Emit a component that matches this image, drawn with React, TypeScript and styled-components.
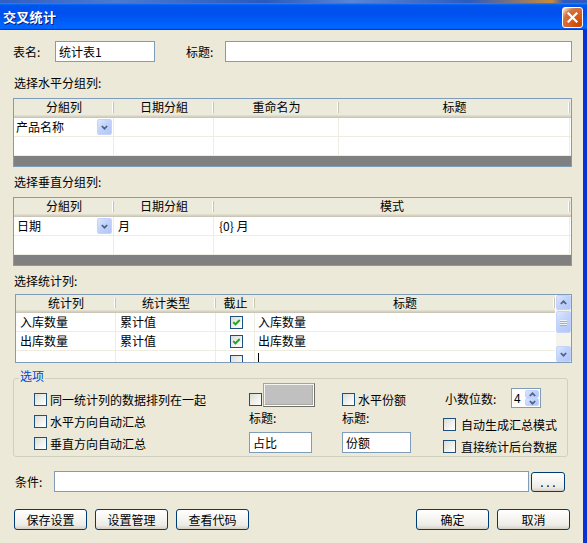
import styled, { createGlobalStyle } from 'styled-components'

const GlobalStyle = createGlobalStyle`
  html, body { margin: 0; padding: 0; background: #ECE9D8; }
  body {
    font-family: "Noto Sans CJK SC", "Liberation Sans", sans-serif;
    font-size: 12px;
    color: #000;
  }
  * { box-sizing: border-box; }
`

const Screen = styled.div`
  width: 587px;
  height: 543px;
  overflow: hidden;
  display: flex;
  flex-direction: column;
  background: #ECE9D8;
`

const Desktop = styled.div`
  flex: none;
  height: 3px;
  background: linear-gradient(90deg, #2F5FC4 0%, #4C79D2 20%, #2A58BE 45%, #5A84D6 60%, #2C5AC0 80%, #C98A3A 94%, #2C5AC0 96%);
`

const TitleBar = styled.div`
  flex: none;
  height: 27px;
  display: flex;
  align-items: center;
  justify-content: space-between;
  padding: 0 4px 0 3px;
  background: linear-gradient(180deg, #0997ff, #0053ee 8%, #0050ee 40%, #06f 88%, #06f 93%, #005bff 95%, #003dd7 96%, #003dd7);
`

const Title = styled.span`
  color: #fff;
  font-weight: 700;
  font-size: 13px;
  letter-spacing: 0.3px;
  text-shadow: 1px 1px 0 #0a1883;
`

const CloseButton = styled.div`
  width: 21px;
  height: 21px;
  margin-top: 1px;
  border: 1px solid #fff;
  border-radius: 3px;
  background: radial-gradient(circle at 85% 85%, #cc4600 0, #dc6527 55%, #cd7546 70%, #ffccb2 90%, #fff);
  display: flex;
  align-items: center;
  justify-content: center;
`

const Body = styled.div`
  flex: 1;
  border-right: 4px solid #0831d9;
  padding: 11px 11px 0 13px;
  display: flex;
  flex-direction: column;
`

const FieldRow = styled.div`
  display: flex;
  align-items: center;
  height: 21px;
  flex: none;
`

const FieldLabel = styled.span<{ $w: number; $ml?: number }>`
  width: ${(p) => p.$w}px;
  margin-left: ${(p) => p.$ml ?? 0}px;
  flex: none;
  white-space: nowrap;
`

const TextInput = styled.div<{ $w?: number }>`
  height: 21px;
  ${(p) => (p.$w ? `width: ${p.$w}px; flex: none;` : 'flex: 1;')}
  border: 1px solid #7f9db9;
  background: #fff;
  padding-left: 3px;
  line-height: 19px;
  white-space: nowrap;
  overflow: hidden;
`

const SectionLabel = styled.div<{ $mt: number; $mb: number }>`
  line-height: 14px;
  height: 14px;
  margin: ${(p) => p.$mt}px 0 ${(p) => p.$mb}px 1px;
  flex: none;
`

const Table = styled.div<{ $inset?: boolean }>`
  flex: none;
  height: 69px;
  margin-left: ${(p) => (p.$inset ? 2 : 0)}px;
  border: 1px solid #7f9db9;
  background: #fff;
  display: flex;
  overflow: hidden;
`

const TableMain = styled.div`
  flex: 1;
  min-width: 0;
  display: flex;
  flex-direction: column;
`

const HeaderRow = styled.div<{ $cols: string; $h: number }>`
  flex: none;
  display: grid;
  grid-template-columns: ${(p) => p.$cols};
  height: ${(p) => p.$h}px;
  line-height: ${(p) => p.$h}px;
  background: #ebeadb;
`

const HeaderCell = styled.div`
  position: relative;
  text-align: center;
  white-space: nowrap;
  &::after {
    content: '';
    position: absolute;
    right: 0;
    top: 3px;
    bottom: 2px;
    width: 1px;
    background: #c7c5b2;
    box-shadow: -1px 0 0 #fff;
  }
`

const HeaderBand = styled.div`
  flex: none;
  height: 3px;
  background: linear-gradient(#e2decd 0 1px, #d6d2c2 1px 2px, #cbc7b8 2px 3px);
`

const Rows = styled.div<{ $fill?: boolean }>`
  flex: ${(p) => (p.$fill ? 1 : 'none')};
  overflow: hidden;
`

const Row = styled.div<{ $cols: string }>`
  display: grid;
  grid-template-columns: ${(p) => p.$cols};
  height: 19px;
  border-bottom: 1px solid #efede2;
`

const Cell = styled.div<{ $pl?: number; $center?: boolean }>`
  border-right: 1px solid #efede2;
  padding-left: ${(p) => p.$pl ?? 3}px;
  display: flex;
  align-items: center;
  justify-content: ${(p) => (p.$center ? 'center' : 'space-between')};
  line-height: 18px;
  white-space: nowrap;
  overflow: hidden;
  &:last-child { border-right: none; }
`

const Filler = styled.div`
  flex: 1;
  background: #808080;
`

const BlueButton = styled.div<{ $w: number; $h: number }>`
  width: ${(p) => p.$w}px;
  height: ${(p) => p.$h}px;
  flex: none;
  border: 1px solid #c3d3fd;
  border-radius: 2px;
  background: linear-gradient(135deg, #dde6fd 0%, #c1d3fb 45%, #b2c6f6 100%);
  display: flex;
  align-items: center;
  justify-content: center;
`

const ComboButton = styled(BlueButton)`
  margin-right: 1px;
`

const ScrollBar = styled.div`
  flex: none;
  width: 16px;
  display: flex;
  flex-direction: column;
  background: #f5f4ea;
  border-left: 1px solid #fff;
`

const ScrollThumb = styled(BlueButton)`
  margin-top: 1px;
  flex-direction: column;
  gap: 1px;
`

const ScrollTrack = styled.div`
  flex: 1;
`

const Grip = styled.span`
  width: 7px;
  height: 1px;
  background: #eef4fe;
  box-shadow: 0 1px 0 #8cb0f8;
`

const Caret = styled.span`
  width: 1px;
  height: 9px;
  background: #000;
  margin-top: -6px;
`

const Box = styled.span<{ $mt?: number }>`
  width: 13px;
  height: 13px;
  flex: none;
  margin-top: ${(p) => p.$mt ?? 0}px;
  border: 1px solid #1c5180;
  background: linear-gradient(135deg, #dcdcd7 0%, #f2f2ef 60%, #ffffff 100%);
  display: flex;
  align-items: center;
  justify-content: center;
`

const GroupBox = styled.div`
  flex: none;
  height: 79px;
  margin: 15px 4px 0 0;
  border: 1px solid #d0d0bf;
  border-radius: 3px;
  display: flex;
  flex-direction: column;
`

const Legend = styled.span`
  align-self: flex-start;
  margin: -9px 0 0 5px;
  padding: 0 1px;
  line-height: 12px;
  height: 12px;
  color: #0046d5;
  background: #ece9d8;
`

const GroupContent = styled.div`
  margin-top: 1px;
  padding-left: 20px;
  display: flex;
`

const Column = styled.div<{ $w?: number; $pt?: number; $gap?: number }>`
  ${(p) => (p.$w ? `width: ${p.$w}px; flex: none;` : 'flex: 1;')}
  padding-top: ${(p) => p.$pt ?? 0}px;
  display: flex;
  flex-direction: column;
  gap: ${(p) => p.$gap ?? 0}px;
`

const CheckRow = styled.div<{ $gap?: number; $mt?: number }>`
  display: flex;
  align-items: center;
  gap: ${(p) => p.$gap ?? 3}px;
  height: 13px;
  line-height: 13px;
  margin-top: ${(p) => p.$mt ?? 0}px;
  white-space: nowrap;
`

const TopRow = styled.div`
  height: 24px;
  display: flex;
  align-items: flex-start;
  gap: 3px;
  white-space: nowrap;
`

const ColorSwatch = styled.div`
  width: 52px;
  height: 24px;
  margin-left: -2px;
  background: #c0c0c0;
  border: 1px solid;
  border-color: #a4a49a #6f6f6a #6f6f6a #a4a49a;
  box-shadow: inset 1px 1px 0 #f4f3ee, inset -1px -1px 0 #ffffff, inset -2px -2px 0 #a8a8a0;
`

const SmallLabel = styled.div`
  margin-top: 4px;
  line-height: 14px;
  height: 14px;
`

const SmallInput = styled(TextInput)`
  margin-top: 7px;
`

const SpinRow = styled.div`
  margin-top: 5px;
  height: 20px;
  display: flex;
  align-items: center;
  padding-left: 2px;
`

const Spin = styled.div`
  width: 30px;
  height: 20px;
  border: 1px solid #7f9db9;
  background: #fff;
  display: flex;
`

const SpinValue = styled.span`
  flex: 1;
  padding-left: 2px;
  line-height: 17px;
`

const SpinButtons = styled.div`
  width: 15px;
  padding: 1px 1px 1px 0;
  display: flex;
  flex-direction: column;
`

const SpinHalf = styled(BlueButton)`
  width: 14px;
  flex: 1;
  height: auto;
`

const ActionRow = styled.div<{ $mt: number }>`
  flex: none;
  margin-top: ${(p) => p.$mt}px;
  display: flex;
  align-items: center;
`

const ButtonGroup = styled.div<{ $ml?: number; $mr?: number }>`
  display: flex;
  gap: 8px;
  margin-left: ${(p) => p.$ml ?? 0}px;
  margin-right: ${(p) => p.$mr ?? 0}px;
`

const Spacer = styled.div`
  flex: 1;
`

const XPButton = styled.div<{ $w: number; $h?: number }>`
  width: ${(p) => p.$w}px;
  height: ${(p) => p.$h ?? 21}px;
  flex: none;
  border: 1px solid #003c74;
  border-radius: 3px;
  background: linear-gradient(180deg, #ffffff 0%, #f6f5f1 45%, #ecebe6 80%, #d6d0c5 100%);
  display: flex;
  align-items: center;
  justify-content: center;
  line-height: 19px;
  white-space: nowrap;
`

const Chevron = ({ up = false }: { up?: boolean }) => (
  <svg width="7" height="5" viewBox="0 0 7 5">
    <polyline
      points={up ? '0.8,4 3.5,1.3 6.2,4' : '0.8,1 3.5,3.7 6.2,1'}
      fill="none"
      stroke="#4d6185"
      strokeWidth="1.7"
    />
  </svg>
)

const Check = ({ on = false, mt }: { on?: boolean; mt?: number }) => (
  <Box $mt={mt}>
    {on && (
      <svg width="9" height="9" viewBox="0 0 9 9">
        <polyline points="1.3,4.2 3.4,6.3 7.7,2" fill="none" stroke="#21a121" strokeWidth="1.9" />
      </svg>
    )}
  </Box>
)

const COLS_H = '100px 100px 125px 231px 1fr'
const COLS_V = '100px 100px 356px 1fr'
const COLS_S = '100px 100px 39px 300px'

export default function App() {
  return (
    <Screen>
      <GlobalStyle />
      <Desktop />
      <TitleBar>
        <Title>交叉统计</Title>
        <CloseButton>
          <svg width="11" height="11" viewBox="0 0 11 11">
            <path d="M1.5 1.5 L9.5 9.5 M9.5 1.5 L1.5 9.5" stroke="#fff" strokeWidth="2.2" strokeLinecap="square" />
          </svg>
        </CloseButton>
      </TitleBar>
      <Body>
        <FieldRow>
          <FieldLabel $w={42}>表名:</FieldLabel>
          <TextInput $w={100}>统计表1</TextInput>
          <FieldLabel $w={39} $ml={31}>标题:</FieldLabel>
          <TextInput />
        </FieldRow>

        <SectionLabel $mt={14} $mb={8}>选择水平分组列:</SectionLabel>
        <Table>
          <TableMain>
            <HeaderRow $cols={COLS_H} $h={16}>
              <HeaderCell>分組列</HeaderCell>
              <HeaderCell>日期分組</HeaderCell>
              <HeaderCell>重命名为</HeaderCell>
              <HeaderCell>标题</HeaderCell>
              <span />
            </HeaderRow>
            <HeaderBand />
            <Rows>
              <Row $cols={COLS_H}>
                <Cell $pl={2}>
                  产品名称
                  <ComboButton $w={15} $h={16}>
                    <Chevron />
                  </ComboButton>
                </Cell>
                <Cell />
                <Cell />
                <Cell />
                <Cell />
              </Row>
              <Row $cols={COLS_H}>
                <Cell />
                <Cell />
                <Cell />
                <Cell />
                <Cell />
              </Row>
            </Rows>
            <Filler />
          </TableMain>
        </Table>

        <SectionLabel $mt={8} $mb={8}>选择垂直分组列:</SectionLabel>
        <Table>
          <TableMain>
            <HeaderRow $cols={COLS_V} $h={16}>
              <HeaderCell>分組列</HeaderCell>
              <HeaderCell>日期分組</HeaderCell>
              <HeaderCell>模式</HeaderCell>
              <span />
            </HeaderRow>
            <HeaderBand />
            <Rows>
              <Row $cols={COLS_V}>
                <Cell $pl={3}>
                  日期
                  <ComboButton $w={15} $h={16}>
                    <Chevron />
                  </ComboButton>
                </Cell>
                <Cell $pl={4}>月</Cell>
                <Cell $pl={5}>{'{0} 月'}</Cell>
                <Cell />
              </Row>
              <Row $cols={COLS_V}>
                <Cell />
                <Cell />
                <Cell />
                <Cell />
              </Row>
            </Rows>
            <Filler />
          </TableMain>
        </Table>

        <SectionLabel $mt={8} $mb={6}>选择统计列:</SectionLabel>
        <Table $inset>
          <TableMain>
            <HeaderRow $cols={COLS_S} $h={15}>
              <HeaderCell>统计列</HeaderCell>
              <HeaderCell>统计类型</HeaderCell>
              <HeaderCell>截止</HeaderCell>
              <HeaderCell>标题</HeaderCell>
            </HeaderRow>
            <HeaderBand />
            <Rows $fill>
              <Row $cols={COLS_S}>
                <Cell $pl={4}>入库数量</Cell>
                <Cell $pl={4}>累计值</Cell>
                <Cell $center>
                  <Check on />
                </Cell>
                <Cell $pl={3}>入库数量</Cell>
              </Row>
              <Row $cols={COLS_S}>
                <Cell $pl={4}>出库数量</Cell>
                <Cell $pl={4}>累计值</Cell>
                <Cell $center>
                  <Check on />
                </Cell>
                <Cell $pl={3}>出库数量</Cell>
              </Row>
              <Row $cols={COLS_S}>
                <Cell />
                <Cell />
                <Cell $center>
                  <Check mt={2} />
                </Cell>
                <Cell $pl={3}>
                  <Caret />
                </Cell>
              </Row>
            </Rows>
          </TableMain>
          <ScrollBar>
            <BlueButton $w={15} $h={15}>
              <Chevron up />
            </BlueButton>
            <ScrollThumb $w={15} $h={22}>
              <Grip />
              <Grip />
              <Grip />
            </ScrollThumb>
            <ScrollTrack />
            <BlueButton $w={15} $h={16}>
              <Chevron />
            </BlueButton>
          </ScrollBar>
        </Table>

        <GroupBox>
          <Legend>选项</Legend>
          <GroupContent>
            <Column $w={215} $pt={10} $gap={9}>
              <CheckRow>
                <Check />
                同一统计列的数据排列在一起
              </CheckRow>
              <CheckRow>
                <Check />
                水平方向自动汇总
              </CheckRow>
              <CheckRow>
                <Check />
                垂直方向自动汇总
              </CheckRow>
            </Column>
            <Column $w={93}>
              <TopRow>
                <Check mt={10} />
                <ColorSwatch />
              </TopRow>
              <SmallLabel>标题:</SmallLabel>
              <SmallInput $w={63}>占比</SmallInput>
            </Column>
            <Column $w={101}>
              <TopRow>
                <CheckRow $mt={10}>
                  <Check />
                  水平份额
                </CheckRow>
              </TopRow>
              <SmallLabel>标题:</SmallLabel>
              <SmallInput $w={69}>份额</SmallInput>
            </Column>
            <Column>
              <SpinRow>
                <FieldLabel $w={66}>小数位数:</FieldLabel>
                <Spin>
                  <SpinValue>4</SpinValue>
                  <SpinButtons>
                    <SpinHalf $w={14} $h={9}>
                      <Chevron up />
                    </SpinHalf>
                    <SpinHalf $w={14} $h={9}>
                      <Chevron />
                    </SpinHalf>
                  </SpinButtons>
                </Spin>
              </SpinRow>
              <CheckRow $gap={5} $mt={10}>
                <Check />
                自动生成汇总模式
              </CheckRow>
              <CheckRow $gap={5} $mt={9}>
                <Check />
                直接统计后台数据
              </CheckRow>
            </Column>
          </GroupContent>
        </GroupBox>

        <ActionRow $mt={14}>
          <FieldLabel $w={39} $ml={2}>条件:</FieldLabel>
          <TextInput />
          <ButtonGroup $ml={2} $mr={7}>
            <XPButton $w={34} $h={20}>. . .</XPButton>
          </ButtonGroup>
        </ActionRow>

        <ActionRow $mt={17}>
          <ButtonGroup $ml={1}>
            <XPButton $w={73}>保存设置</XPButton>
            <XPButton $w={73}>设置管理</XPButton>
            <XPButton $w={73}>查看代码</XPButton>
          </ButtonGroup>
          <Spacer />
          <ButtonGroup $mr={2}>
            <XPButton $w={73}>确定</XPButton>
            <XPButton $w={73}>取消</XPButton>
          </ButtonGroup>
        </ActionRow>
      </Body>
    </Screen>
  )
}
